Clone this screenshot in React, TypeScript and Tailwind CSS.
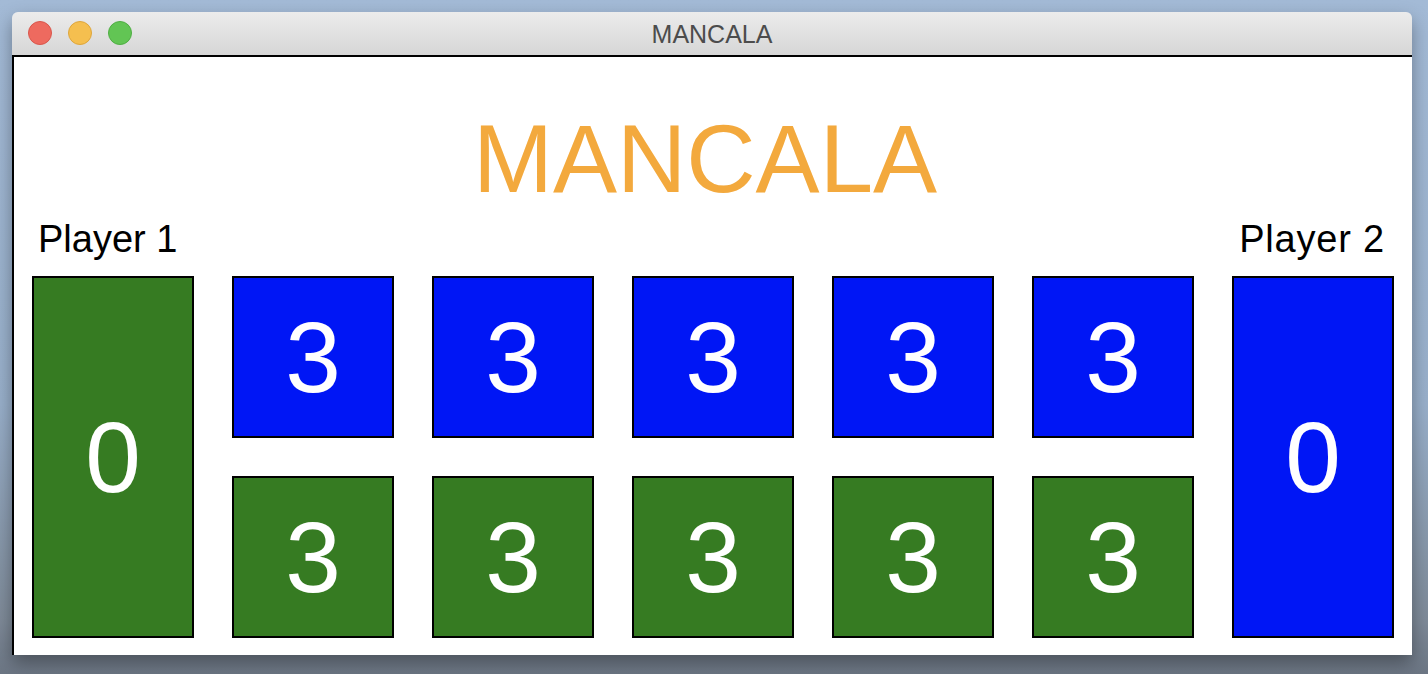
import React from "react";

const font = { fontFamily: '"Liberation Sans", Arial, sans-serif' };

function Pit({ value, color, tall }: { value: number; color: "blue" | "green"; tall?: boolean }) {
  return (
    <div
      className={`flex items-center justify-center border-2 border-black text-white text-[100px] leading-none w-[162px] ${
        tall ? "h-[362px]" : "h-[162px]"
      } ${color === "blue" ? "bg-[#0016f5]" : "bg-[#367b22]"}`}
    >
      {value}
    </div>
  );
}

export default function App() {
  return (
    <div
      className="w-[1428px] h-[674px] overflow-hidden bg-[linear-gradient(180deg,#a3bad6_0%,#98afca_60%,#7e8a98_92%,#6c7684_100%)] pt-[12px] pl-[12px]"
      style={font}
    >
      <div className="w-[1400px] h-[643px] flex flex-col shadow-[0_8px_18px_rgba(0,0,0,0.35)] rounded-t-[6px]">
        {/* title bar */}
        <div className="relative h-[43px] rounded-t-[6px] bg-[linear-gradient(180deg,#ececec_0%,#d6d6d6_100%)] flex items-center justify-center">
          <div className="absolute left-[16px] top-[9px] flex gap-[16px]">
            <div className="w-[24px] h-[24px] rounded-full bg-[#ee6a5f] border border-[#d9564c]" />
            <div className="w-[24px] h-[24px] rounded-full bg-[#f5bf4f] border border-[#dea63c]" />
            <div className="w-[24px] h-[24px] rounded-full bg-[#62c554] border border-[#4fae43]" />
          </div>
          <span className="text-[25px] leading-none text-[#4c4c4c] mt-[1px]">MANCALA</span>
        </div>
        {/* content */}
        <div className="flex-1 bg-white border-t-2 border-l-2 border-black flex flex-col pl-[18px]">
          <div className="mt-[54px] h-[96px] flex justify-center pr-[34px] text-[96px] leading-none text-[#f3a93d]">
            MANCALA
          </div>
          <div className="mt-[13px] h-[38px] w-[1362px] flex justify-between text-[38px] leading-none text-black">
            <span className="ml-[6px]">Player 1</span>
            <span className="mr-[9px] tracking-[0.8px]">Player 2</span>
          </div>
          <div className="mt-[18px] flex gap-[38px]">
            <Pit value={0} color="green" tall />
            <div className="grid grid-cols-5 gap-[38px]">
              {[0, 1, 2, 3, 4].map((i) => (
                <Pit key={`b${i}`} value={3} color="blue" />
              ))}
              {[0, 1, 2, 3, 4].map((i) => (
                <Pit key={`g${i}`} value={3} color="green" />
              ))}
            </div>
            <Pit value={0} color="blue" tall />
          </div>
        </div>
      </div>
    </div>
  );
}
